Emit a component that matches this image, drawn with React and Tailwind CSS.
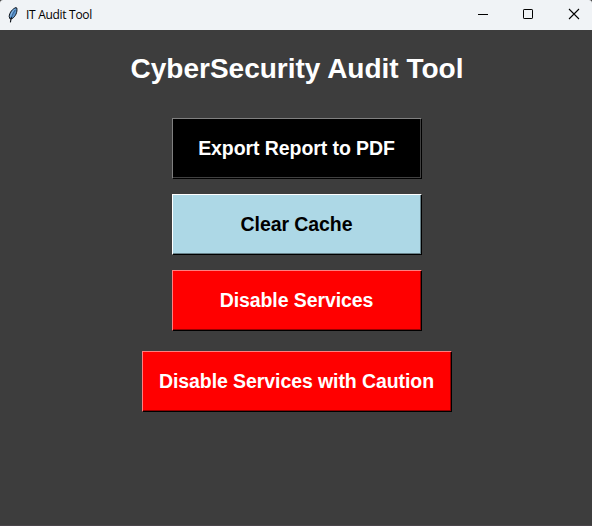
import React from 'react';

function Feather() {
  return (
    <svg width="10" height="16" viewBox="0 0 10 16" className="shrink-0">
      <path d="M8 .6C5 1.4 1.3 5.4 1.2 9.6l.9 2.4 2-.4C7.4 9.8 9.6 5 8.8 1z" fill="#5b94cc" stroke="#10151c" strokeWidth="1" />
      <path d="M6.6 2.2C4.6 4 3 6.6 2.6 9.4" fill="none" stroke="#8fbce6" strokeWidth="1" />
      <path d="M3.6 10C3 12 2.6 13.4 2.4 15.4" fill="none" stroke="#10151c" strokeWidth="1.1" />
      <path d="M7.2 3C5.6 5.6 4.2 8 3.6 10.4" fill="none" stroke="#234a78" strokeWidth=".7" />
    </svg>
  );
}

function TitleBar() {
  return (
    <header className="flex h-[30px] shrink-0 items-center rounded-t-[3px] bg-[#f0f3f6] pl-2 text-black">
      <Feather />
      <span className="ml-2 font-['Open_Sans','Noto_Sans',sans-serif] text-[12px] leading-4 tracking-[-0.3px] whitespace-nowrap">
        IT Audit Tool
      </span>
      <div className="ml-auto flex h-full items-center">
        <svg width="46" height="30" viewBox="0 0 46 30" fill="none" stroke="#000">
          <path d="M18 14.5h10" />
        </svg>
        <svg width="46" height="30" viewBox="0 0 46 30" fill="none" stroke="#000">
          <rect x="17.5" y="9.5" width="9" height="9" rx=".6" />
        </svg>
        <svg width="40" height="30" viewBox="0 0 40 30" fill="none" stroke="#000">
          <path d="M17 9l10 10M27 9L17 19" strokeWidth="1.1" />
        </svg>
      </div>
    </header>
  );
}

function BevelButton({ outer, inner, children }) {
  return (
    <button className={'block h-[61px] border border-r-black border-b-black ' + outer}>
      <span
        className={
          'flex h-full w-full items-center justify-center border-r border-b pt-0.5 text-[19.5px] leading-none font-bold tracking-[-0.08px] whitespace-nowrap ' +
          inner
        }
      >
        {children}
      </span>
    </button>
  );
}

export default function App() {
  return (
    <div className="flex h-[526px] w-[592px] flex-col overflow-hidden bg-[#3d3d3d] font-['Liberation_Sans',Arial,sans-serif]">
      <TitleBar />
      <main className="flex flex-col items-center pl-0.5">
        <h1 className="mt-[23px] text-[28px] leading-8 font-bold whitespace-nowrap text-white">
          CyberSecurity Audit Tool
        </h1>
        <div className="mt-[33px] flex flex-col items-center gap-[15px]">
          <BevelButton outer="w-[250px] border-t-[#808080] border-l-[#808080]" inner="border-[#404040] bg-black text-white">
            Export Report to PDF
          </BevelButton>
          <BevelButton outer="w-[250px] border-t-white border-l-white" inner="border-[#68828a] bg-[#add8e6] text-black">
            Clear Cache
          </BevelButton>
          <BevelButton outer="w-[250px] border-t-[#ff8080] border-l-[#ff8080]" inner="border-[#990000] bg-[#ff0000] text-white">
            Disable Services
          </BevelButton>
        </div>
        <div className="mt-5">
          <BevelButton outer="w-[310px] border-t-[#ff8080] border-l-[#ff8080]" inner="border-[#990000] bg-[#ff0000] text-white">
            Disable Services with Caution
          </BevelButton>
        </div>
      </main>
      <div className="mt-auto h-px bg-[#4a454a]" />
    </div>
  );
}
